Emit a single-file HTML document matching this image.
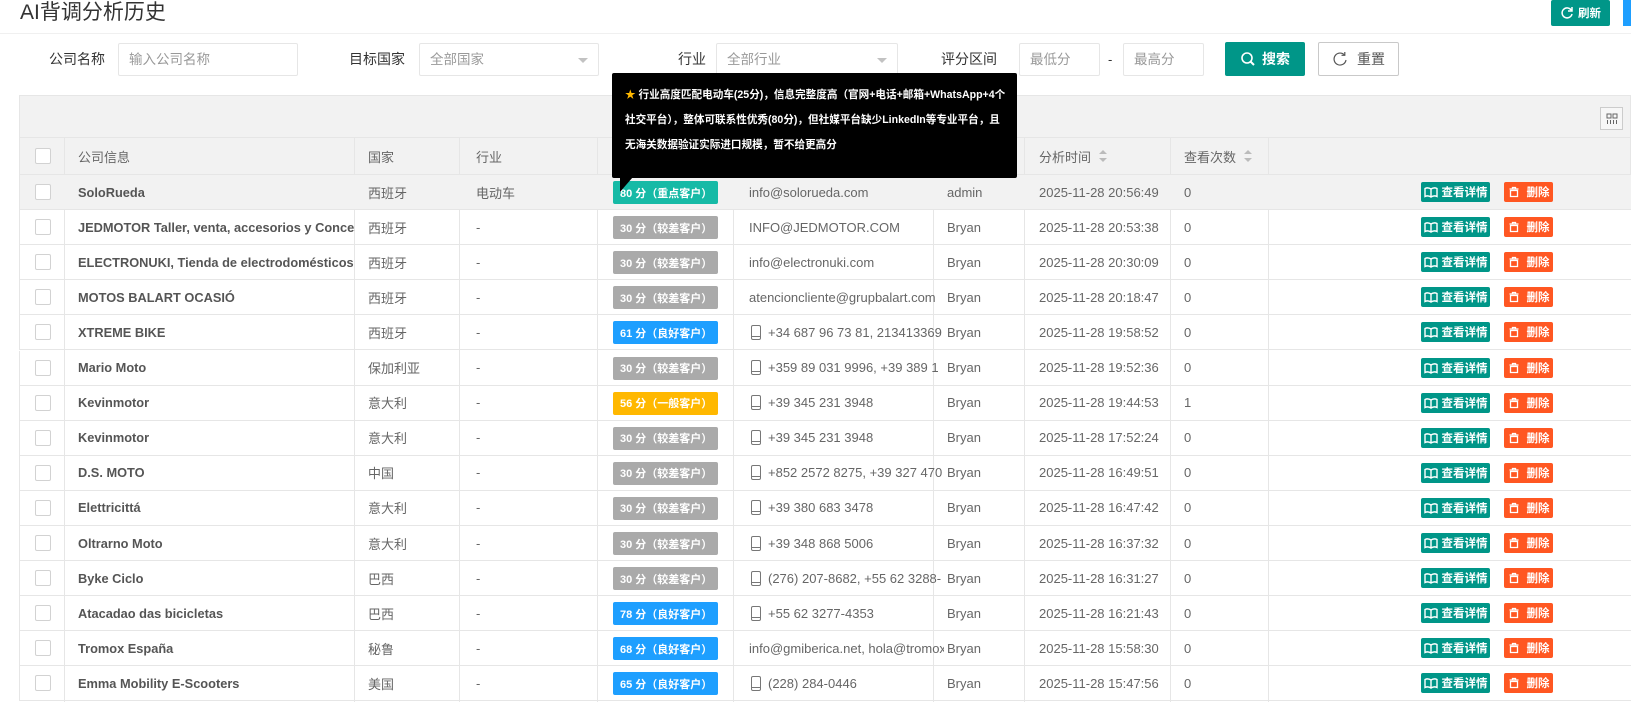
<!DOCTYPE html>
<html><head><meta charset="utf-8">
<style>
*{box-sizing:border-box;margin:0;padding:0}
body{width:1631px;height:709px;overflow:hidden;background:#fff;font-family:"Liberation Sans","Noto Sans CJK SC",sans-serif;color:#666;font-size:13px;position:relative}
.a{position:absolute}
.title{left:20px;top:0;font-size:21px;color:#333;line-height:26px}
.hl{left:0;top:33px;width:1631px;height:1px;background:#f0f0f0}
.btn{position:absolute;color:#fff;font-size:12px;font-weight:bold;display:flex;align-items:center;justify-content:center;border-radius:2px}
.btn svg{flex-shrink:0}
.lbl{position:absolute;top:43px;height:33px;line-height:33px;color:#333;font-size:14px;text-align:right}
.inp{position:absolute;top:43px;height:33px;border:1px solid #e6e6e6;border-radius:2px;line-height:31px;padding-left:10px;color:#999;font-size:13.5px}
.car{position:absolute;right:10px;top:14px;border:5px solid transparent;border-top:5px solid #c2c2c2}
.tb{left:19px;top:95px;width:1612px;height:42px;background:#f2f2f2;border:1px solid #e6e6e6;border-bottom:none}
.hd{left:19px;top:137px;width:1612px;height:38px;background:#f2f2f2;border:1px solid #e6e6e6}
.row{position:absolute;left:19px;width:1612px;height:35.1px;border-bottom:1px solid #e6e6e6;border-left:1px solid #e6e6e6}
.c{position:absolute;top:0;height:100%;display:flex;align-items:center;white-space:nowrap;overflow:hidden}
.vl{position:absolute;top:137px;height:565px;width:1px;background:#e6e6e6}
.cb{position:absolute;left:15px;width:16px;height:16px;border:1px solid #d2d2d2;background:#fff;border-radius:2px}
.nm{font-weight:bold;color:#555;font-size:12.8px}
.sc{position:absolute;left:593px;width:105px;height:23px;color:#fff;font-size:11px;font-weight:bold;display:flex;align-items:center;padding-left:7px;border-radius:2px}
.g{background:#aaa}.b{background:#1e9fff}.y{background:#ffb800}.t{background:#16baa6}
.ph{display:inline-block;flex-shrink:0;width:10px;height:15px;border:1.3px solid #777;border-radius:2px;margin-right:7px;position:relative}
.ph:after{content:"";position:absolute;left:0;right:0;bottom:2px;height:1px;background:#777}
.v{position:absolute;left:1401px;width:69px;height:20px;background:#009688;font-size:11.5px}
.d{position:absolute;left:1484px;width:49px;height:20px;background:#ff5722;font-size:11.5px}
.tip{left:612px;top:73px;width:405px;height:105px;background:#000;border-radius:2px;color:#fff;font-size:10.6px;font-weight:bold;padding:10px 10px 10px 13px;line-height:25px}
.arr{left:620px;top:177px;border:7px solid transparent;border-top:8px solid #000;border-left:6px solid #000;width:0;height:0}
.sort{display:inline-block;margin-left:8px;width:8px;height:12px;position:relative}
.sort:before{content:"";position:absolute;top:0;left:0;border:4px solid transparent;border-bottom:4px solid #bbb;border-top:none}
.sort:after{content:"";position:absolute;bottom:0;left:0;border:4px solid transparent;border-top:4px solid #bbb;border-bottom:none}
</style></head><body>
<div class="a title">AI背调分析历史</div>
<div class="a hl"></div>
<div class="btn" style="left:1551px;top:0;width:59px;height:26px;background:#009688;font-size:11.5px"><svg width="14" height="14" viewBox="0 0 14 14" style="margin-right:4px"><path d="M11.5 4.5A5 5 0 1 0 12 8" fill="none" stroke="#fff" stroke-width="1.5"/><path d="M12 1v4h-4" fill="none" stroke="#fff" stroke-width="1.5"/></svg>刷新</div>
<div class="a" style="left:1623px;top:0;width:8px;height:26px;background:#1e9fff"></div>

<div class="lbl" style="left:40px;width:65px">公司名称</div>
<div class="inp" style="left:118px;width:180px">输入公司名称</div>
<div class="lbl" style="left:340px;width:65px">目标国家</div>
<div class="inp" style="left:419px;width:180px">全部国家<span class="car"></span></div>
<div class="lbl" style="left:640px;width:66px">行业</div>
<div class="inp" style="left:716px;width:182px">全部行业<span class="car"></span></div>
<div class="lbl" style="left:930px;width:67px">评分区间</div>
<div class="inp" style="left:1019px;width:81px">最低分</div>
<div class="a" style="left:1108px;top:43px;line-height:33px;color:#333">-</div>
<div class="inp" style="left:1123px;width:81px">最高分</div>
<div class="btn" style="left:1225px;top:42px;width:80px;height:34px;background:#009688;font-size:14px"><svg width="16" height="16" viewBox="0 0 16 16" style="margin-right:6px"><circle cx="7" cy="7" r="5" fill="none" stroke="#fff" stroke-width="1.6"/><path d="M10.5 10.5L14 14" stroke="#fff" stroke-width="2"/></svg>搜索</div>
<div class="btn" style="left:1318px;top:42px;width:81px;height:34px;background:#fff;border:1px solid #c9c9c9;color:#555;font-weight:normal;font-size:14px"><svg width="16" height="16" viewBox="0 0 16 16" style="margin-right:9px"><path d="M12.5 4A6 6 0 1 0 14 9" fill="none" stroke="#555" stroke-width="1.2"/><path d="M12.8 1v3.3H9.5" fill="none" stroke="#555" stroke-width="1.2"/></svg>重置</div>

<div class="a tb"></div>
<div class="a" style="left:1600px;top:107px;width:23px;height:23px;border:1px solid #ccc;background:#f7f7f7;display:flex;align-items:center;justify-content:center"><svg width="12" height="12" viewBox="0 0 12 12"><rect x="1" y="1" width="4" height="4" fill="none" stroke="#666"/><rect x="7" y="1" width="4" height="4" fill="none" stroke="#666"/><path d="M1.5 7v4M4.5 7v4M7.5 7v4M10.5 7v4" stroke="#666"/></svg></div>
<div class="a hd">
<div class="cb" style="top:10px"></div>
<div class="c" style="left:58px">公司信息</div>
<div class="c" style="left:348px">国家</div>
<div class="c" style="left:456px">行业</div>
<div class="c" style="left:1019px">分析时间<span class="sort"></span></div>
<div class="c" style="left:1164px">查看次数<span class="sort"></span></div>
</div>

<div class="vl" style="left:64px"></div>
<div class="vl" style="left:354px"></div>
<div class="vl" style="left:459px"></div>
<div class="vl" style="left:597px"></div>
<div class="vl" style="left:733px"></div>
<div class="vl" style="left:933px"></div>
<div class="vl" style="left:1024px"></div>
<div class="vl" style="left:1170px"></div>
<div class="vl" style="left:1268px"></div>

<svg width="0" height="0" style="position:absolute"><defs>
<symbol id="bk" viewBox="0 0 14 12"><path d="M1 2.5Q4 1 7 3Q10 1 13 2.5V10.5Q10 9 7 11Q4 9 1 10.5Z M7 3V11" fill="none" stroke="#fff" stroke-width="1.4"/></symbol>
<symbol id="tr" viewBox="0 0 12 12"><path d="M1.5 3H10.5M4.5 3V1.5H7.5V3M2.5 4.5H9.5V10.5H2.5Z" fill="none" stroke="#fff" stroke-width="1.3"/></symbol>
</defs></svg>

<div class="row" style="top:175px;background:#f2f2f2"><div class="cb" style="top:9px"></div><div class="c nm" style="left:58px;width:277px">SoloRueda</div><div class="c" style="left:348px">西班牙</div><div class="c" style="left:456px">电动车</div><div class="sc t" style="top:6px">80 分（重点客户）</div><div class="c" style="left:729px;width:195px">info@solorueda.com</div><div class="c" style="left:927px">admin</div><div class="c" style="left:1019px">2025-11-28 20:56:49</div><div class="c" style="left:1164px">0</div><div class="btn v" style="top:7px"><svg width="14" height="12" style="margin-right:4px"><use href="#bk"/></svg>查看详情</div><div class="btn d" style="top:7px"><svg width="12" height="12" style="margin-right:7px"><use href="#tr"/></svg>删除</div></div>
<div class="row" style="top:210.1px"><div class="cb" style="top:9px"></div><div class="c nm" style="left:58px;width:277px">JEDMOTOR Taller, venta, accesorios y Concesionario</div><div class="c" style="left:348px">西班牙</div><div class="c" style="left:456px">-</div><div class="sc g" style="top:6px">30 分（较差客户）</div><div class="c" style="left:729px;width:195px">INFO@JEDMOTOR.COM</div><div class="c" style="left:927px">Bryan</div><div class="c" style="left:1019px">2025-11-28 20:53:38</div><div class="c" style="left:1164px">0</div><div class="btn v" style="top:7px"><svg width="14" height="12" style="margin-right:4px"><use href="#bk"/></svg>查看详情</div><div class="btn d" style="top:7px"><svg width="12" height="12" style="margin-right:7px"><use href="#tr"/></svg>删除</div></div>
<div class="row" style="top:245.2px"><div class="cb" style="top:9px"></div><div class="c nm" style="left:58px;width:277px">ELECTRONUKI, Tienda de electrodomésticos</div><div class="c" style="left:348px">西班牙</div><div class="c" style="left:456px">-</div><div class="sc g" style="top:6px">30 分（较差客户）</div><div class="c" style="left:729px;width:195px">info@electronuki.com</div><div class="c" style="left:927px">Bryan</div><div class="c" style="left:1019px">2025-11-28 20:30:09</div><div class="c" style="left:1164px">0</div><div class="btn v" style="top:7px"><svg width="14" height="12" style="margin-right:4px"><use href="#bk"/></svg>查看详情</div><div class="btn d" style="top:7px"><svg width="12" height="12" style="margin-right:7px"><use href="#tr"/></svg>删除</div></div>
<div class="row" style="top:280.3px"><div class="cb" style="top:9px"></div><div class="c nm" style="left:58px;width:277px">MOTOS BALART OCASIÓ</div><div class="c" style="left:348px">西班牙</div><div class="c" style="left:456px">-</div><div class="sc g" style="top:6px">30 分（较差客户）</div><div class="c" style="left:729px;width:195px">atencioncliente@grupbalart.com</div><div class="c" style="left:927px">Bryan</div><div class="c" style="left:1019px">2025-11-28 20:18:47</div><div class="c" style="left:1164px">0</div><div class="btn v" style="top:7px"><svg width="14" height="12" style="margin-right:4px"><use href="#bk"/></svg>查看详情</div><div class="btn d" style="top:7px"><svg width="12" height="12" style="margin-right:7px"><use href="#tr"/></svg>删除</div></div>
<div class="row" style="top:315.4px"><div class="cb" style="top:9px"></div><div class="c nm" style="left:58px;width:277px">XTREME BIKE</div><div class="c" style="left:348px">西班牙</div><div class="c" style="left:456px">-</div><div class="sc b" style="top:6px">61 分（良好客户）</div><div class="c" style="left:731px;width:193px"><span class="ph"></span>+34 687 96 73 81, 213413369</div><div class="c" style="left:927px">Bryan</div><div class="c" style="left:1019px">2025-11-28 19:58:52</div><div class="c" style="left:1164px">0</div><div class="btn v" style="top:7px"><svg width="14" height="12" style="margin-right:4px"><use href="#bk"/></svg>查看详情</div><div class="btn d" style="top:7px"><svg width="12" height="12" style="margin-right:7px"><use href="#tr"/></svg>删除</div></div>
<div class="row" style="top:350.5px"><div class="cb" style="top:9px"></div><div class="c nm" style="left:58px;width:277px">Mario Moto</div><div class="c" style="left:348px">保加利亚</div><div class="c" style="left:456px">-</div><div class="sc g" style="top:6px">30 分（较差客户）</div><div class="c" style="left:731px;width:193px"><span class="ph"></span>+359 89 031 9996, +39 389 1</div><div class="c" style="left:927px">Bryan</div><div class="c" style="left:1019px">2025-11-28 19:52:36</div><div class="c" style="left:1164px">0</div><div class="btn v" style="top:7px"><svg width="14" height="12" style="margin-right:4px"><use href="#bk"/></svg>查看详情</div><div class="btn d" style="top:7px"><svg width="12" height="12" style="margin-right:7px"><use href="#tr"/></svg>删除</div></div>
<div class="row" style="top:385.6px"><div class="cb" style="top:9px"></div><div class="c nm" style="left:58px;width:277px">Kevinmotor</div><div class="c" style="left:348px">意大利</div><div class="c" style="left:456px">-</div><div class="sc y" style="top:6px">56 分（一般客户）</div><div class="c" style="left:731px;width:193px"><span class="ph"></span>+39 345 231 3948</div><div class="c" style="left:927px">Bryan</div><div class="c" style="left:1019px">2025-11-28 19:44:53</div><div class="c" style="left:1164px">1</div><div class="btn v" style="top:7px"><svg width="14" height="12" style="margin-right:4px"><use href="#bk"/></svg>查看详情</div><div class="btn d" style="top:7px"><svg width="12" height="12" style="margin-right:7px"><use href="#tr"/></svg>删除</div></div>
<div class="row" style="top:420.7px"><div class="cb" style="top:9px"></div><div class="c nm" style="left:58px;width:277px">Kevinmotor</div><div class="c" style="left:348px">意大利</div><div class="c" style="left:456px">-</div><div class="sc g" style="top:6px">30 分（较差客户）</div><div class="c" style="left:731px;width:193px"><span class="ph"></span>+39 345 231 3948</div><div class="c" style="left:927px">Bryan</div><div class="c" style="left:1019px">2025-11-28 17:52:24</div><div class="c" style="left:1164px">0</div><div class="btn v" style="top:7px"><svg width="14" height="12" style="margin-right:4px"><use href="#bk"/></svg>查看详情</div><div class="btn d" style="top:7px"><svg width="12" height="12" style="margin-right:7px"><use href="#tr"/></svg>删除</div></div>
<div class="row" style="top:455.8px"><div class="cb" style="top:9px"></div><div class="c nm" style="left:58px;width:277px">D.S. MOTO</div><div class="c" style="left:348px">中国</div><div class="c" style="left:456px">-</div><div class="sc g" style="top:6px">30 分（较差客户）</div><div class="c" style="left:731px;width:193px"><span class="ph"></span>+852 2572 8275, +39 327 470</div><div class="c" style="left:927px">Bryan</div><div class="c" style="left:1019px">2025-11-28 16:49:51</div><div class="c" style="left:1164px">0</div><div class="btn v" style="top:7px"><svg width="14" height="12" style="margin-right:4px"><use href="#bk"/></svg>查看详情</div><div class="btn d" style="top:7px"><svg width="12" height="12" style="margin-right:7px"><use href="#tr"/></svg>删除</div></div>
<div class="row" style="top:490.9px"><div class="cb" style="top:9px"></div><div class="c nm" style="left:58px;width:277px">Elettricittá</div><div class="c" style="left:348px">意大利</div><div class="c" style="left:456px">-</div><div class="sc g" style="top:6px">30 分（较差客户）</div><div class="c" style="left:731px;width:193px"><span class="ph"></span>+39 380 683 3478</div><div class="c" style="left:927px">Bryan</div><div class="c" style="left:1019px">2025-11-28 16:47:42</div><div class="c" style="left:1164px">0</div><div class="btn v" style="top:7px"><svg width="14" height="12" style="margin-right:4px"><use href="#bk"/></svg>查看详情</div><div class="btn d" style="top:7px"><svg width="12" height="12" style="margin-right:7px"><use href="#tr"/></svg>删除</div></div>
<div class="row" style="top:526px"><div class="cb" style="top:9px"></div><div class="c nm" style="left:58px;width:277px">Oltrarno Moto</div><div class="c" style="left:348px">意大利</div><div class="c" style="left:456px">-</div><div class="sc g" style="top:6px">30 分（较差客户）</div><div class="c" style="left:731px;width:193px"><span class="ph"></span>+39 348 868 5006</div><div class="c" style="left:927px">Bryan</div><div class="c" style="left:1019px">2025-11-28 16:37:32</div><div class="c" style="left:1164px">0</div><div class="btn v" style="top:7px"><svg width="14" height="12" style="margin-right:4px"><use href="#bk"/></svg>查看详情</div><div class="btn d" style="top:7px"><svg width="12" height="12" style="margin-right:7px"><use href="#tr"/></svg>删除</div></div>
<div class="row" style="top:561.1px"><div class="cb" style="top:9px"></div><div class="c nm" style="left:58px;width:277px">Byke Ciclo</div><div class="c" style="left:348px">巴西</div><div class="c" style="left:456px">-</div><div class="sc g" style="top:6px">30 分（较差客户）</div><div class="c" style="left:731px;width:193px"><span class="ph"></span>(276) 207-8682, +55 62 3288-</div><div class="c" style="left:927px">Bryan</div><div class="c" style="left:1019px">2025-11-28 16:31:27</div><div class="c" style="left:1164px">0</div><div class="btn v" style="top:7px"><svg width="14" height="12" style="margin-right:4px"><use href="#bk"/></svg>查看详情</div><div class="btn d" style="top:7px"><svg width="12" height="12" style="margin-right:7px"><use href="#tr"/></svg>删除</div></div>
<div class="row" style="top:596.2px"><div class="cb" style="top:9px"></div><div class="c nm" style="left:58px;width:277px">Atacadao das bicicletas</div><div class="c" style="left:348px">巴西</div><div class="c" style="left:456px">-</div><div class="sc b" style="top:6px">78 分（良好客户）</div><div class="c" style="left:731px;width:193px"><span class="ph"></span>+55 62 3277-4353</div><div class="c" style="left:927px">Bryan</div><div class="c" style="left:1019px">2025-11-28 16:21:43</div><div class="c" style="left:1164px">0</div><div class="btn v" style="top:7px"><svg width="14" height="12" style="margin-right:4px"><use href="#bk"/></svg>查看详情</div><div class="btn d" style="top:7px"><svg width="12" height="12" style="margin-right:7px"><use href="#tr"/></svg>删除</div></div>
<div class="row" style="top:631.3px"><div class="cb" style="top:9px"></div><div class="c nm" style="left:58px;width:277px">Tromox España</div><div class="c" style="left:348px">秘鲁</div><div class="c" style="left:456px">-</div><div class="sc b" style="top:6px">68 分（良好客户）</div><div class="c" style="left:729px;width:195px">info@gmiberica.net, hola@tromox</div><div class="c" style="left:927px">Bryan</div><div class="c" style="left:1019px">2025-11-28 15:58:30</div><div class="c" style="left:1164px">0</div><div class="btn v" style="top:7px"><svg width="14" height="12" style="margin-right:4px"><use href="#bk"/></svg>查看详情</div><div class="btn d" style="top:7px"><svg width="12" height="12" style="margin-right:7px"><use href="#tr"/></svg>删除</div></div>
<div class="row" style="top:666.4px"><div class="cb" style="top:9px"></div><div class="c nm" style="left:58px;width:277px">Emma Mobility E-Scooters</div><div class="c" style="left:348px">美国</div><div class="c" style="left:456px">-</div><div class="sc b" style="top:6px">65 分（良好客户）</div><div class="c" style="left:731px;width:193px"><span class="ph"></span>(228) 284-0446</div><div class="c" style="left:927px">Bryan</div><div class="c" style="left:1019px">2025-11-28 15:47:56</div><div class="c" style="left:1164px">0</div><div class="btn v" style="top:7px"><svg width="14" height="12" style="margin-right:4px"><use href="#bk"/></svg>查看详情</div><div class="btn d" style="top:7px"><svg width="12" height="12" style="margin-right:7px"><use href="#tr"/></svg>删除</div></div>

<div class="a tip"><span style="color:#ffb800">★</span> 行业高度匹配电动车(25分)，信息完整度高（官网+电话+邮箱+WhatsApp+4个社交平台），整体可联系性优秀(80分)，但社媒平台缺少LinkedIn等专业平台，且无海关数据验证实际进口规模，暂不给更高分</div>
<div class="a arr"></div>
</body></html>
